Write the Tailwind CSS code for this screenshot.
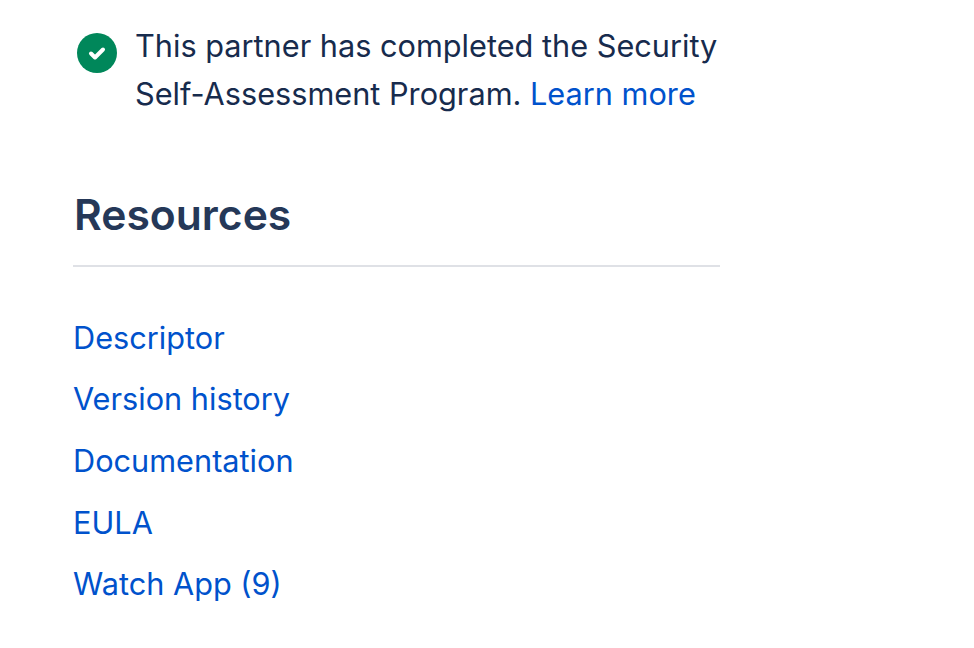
<!doctype html>
<html>
  <head>
    <meta charset="UTF-8">
    <title>Resources</title>
    <script src="https://cdn.jsdelivr.net/npm/@tailwindcss/browser@4"></script>
  </head>
  <body class="bg-white font-['Inter',sans-serif]">
    <div class="w-[647px] ml-[73px] pt-[22px]">
      <div class="flex items-start">
        <svg class="w-[40px] h-[40px] ml-[4px] mt-[11px] shrink-0" viewBox="0 0 40 40">
          <circle cx="20" cy="20" r="20" fill="#00875a"></circle>
          <path d="M14 20.5l4 4 8-8" fill="none" stroke="#fff" stroke-width="4" stroke-linecap="round" stroke-linejoin="round"></path>
        </svg>
        <p class="ml-[18px] text-[30.7px] leading-[48px] text-[#172b4d]">This partner has completed the Security Self-Assessment Program. <a class="text-[#0052cc]" href="#">Learn more</a></p>
      </div>
      <h2 class="mt-[69px] pl-px text-[42.6px] leading-[56px] font-semibold text-[#253858]">Resources</h2>
      <div class="mt-[22px] border-t-2 border-[#dfe1e6]"></div>
      <ul class="mt-[46.8px] flex flex-col gap-[13.6px] text-[30.7px] leading-[48px] text-[#0052cc]">
        <li><a href="#">Descriptor</a></li>
        <li><a href="#">Version history</a></li>
        <li><a href="#">Documentation</a></li>
        <li><a href="#">EULA</a></li>
        <li><a href="#">Watch App (9)</a></li>
      </ul>
    </div>
  </body>
</html>
